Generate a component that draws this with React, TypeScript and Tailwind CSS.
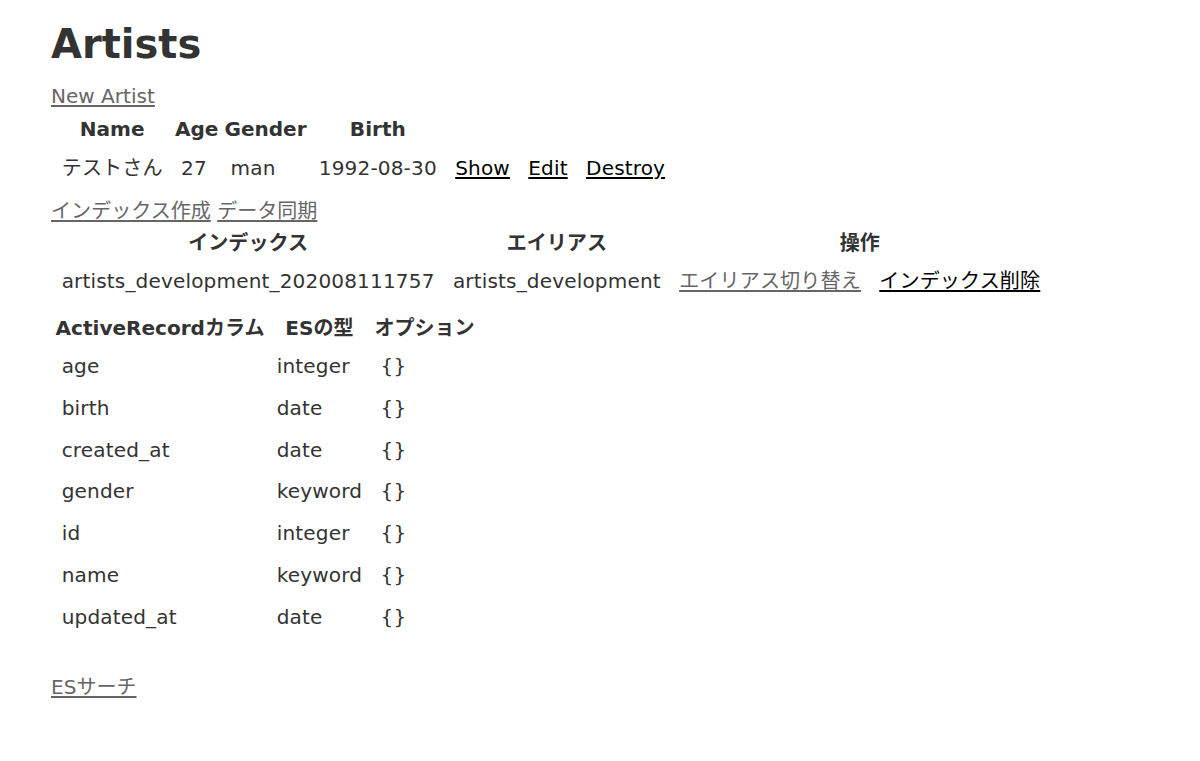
const fields: [string, string][] = [
  ['age', 'integer'],
  ['birth', 'date'],
  ['created_at', 'date'],
  ['gender', 'keyword'],
  ['id', 'integer'],
  ['name', 'keyword'],
  ['updated_at', 'date'],
]

// scaffold styles, scaled ~1.54x
const font = "font-['DejaVu_Sans','Verdana','Noto_Sans_CJK_JP',sans-serif]"
const table = 'border-separate border-spacing-[3.09px]'
const th = 'px-[1.54px] pt-[1.54px] pb-[7.7px] text-center font-bold'
const td = 'px-[7.7px] pt-0 pb-[11px] text-left align-top tracking-[0.15px]'
const visited = 'text-[#666] underline'
const link = 'text-black underline'

export default function App() {
  return (
    <div
      className={`${font} min-h-[761px] bg-white pt-[20px] pl-[51px] text-[20.06px] leading-[27.78px] text-[#333]`}
    >
      <h1 className="m-0 text-[40px] leading-[48px] font-bold">Artists</h1>

      <div className="mt-[15px]">
        <a href="#" className={visited}>New Artist</a>
      </div>

      <table className={`${table} mt-[1px]`}>
        <thead>
          <tr>
            <th className={th}>Name</th>
            <th className={th}>Age</th>
            <th className={th}>Gender</th>
            <th className={th}>Birth</th>
            <th className={th} colSpan={3}></th>
          </tr>
        </thead>
        <tbody>
          <tr>
            <td className={td}>テストさん</td>
            <td className={td}>27</td>
            <td className={td}>man</td>
            <td className={td}>1992-08-30</td>
            <td className={td}><a href="#" className={link}>Show</a></td>
            <td className={td}><a href="#" className={link}>Edit</a></td>
            <td className={td}><a href="#" className={link}>Destroy</a></td>
          </tr>
        </tbody>
      </table>

      <div className="mt-[1px]">
        <a href="#" className={visited}>インデックス作成</a>{' '}
        <a href="#" className={visited}>データ同期</a>
      </div>

      <table className={table}>
        <thead>
          <tr>
            <th className={th}>インデックス</th>
            <th className={th}>エイリアス</th>
            <th className={th} colSpan={2}>操作</th>
          </tr>
        </thead>
        <tbody>
          <tr>
            <td className={td}>artists_development_202008111757</td>
            <td className={td}>artists_development</td>
            <td className={td}><a href="#" className={visited}>エイリアス切り替え</a></td>
            <td className={td}><a href="#" className={link}>インデックス削除</a></td>
          </tr>
        </tbody>
      </table>

      <table className={table}>
        <thead>
          <tr>
            <th className={th}>ActiveRecordカラム</th>
            <th className={th}>ESの型</th>
            <th className={th}>オプション</th>
          </tr>
        </thead>
        <tbody>
          {fields.map(([name, type]) => (
            <tr key={name}>
              <td className={td}>{name}</td>
              <td className={td}>{type}</td>
              <td className={td}>{'{}'}</td>
            </tr>
          ))}
        </tbody>
      </table>

      <br />
      <div className="mt-[1px]">
        <a href="#" className={visited}>ESサーチ</a>
      </div>
    </div>
  )
}
